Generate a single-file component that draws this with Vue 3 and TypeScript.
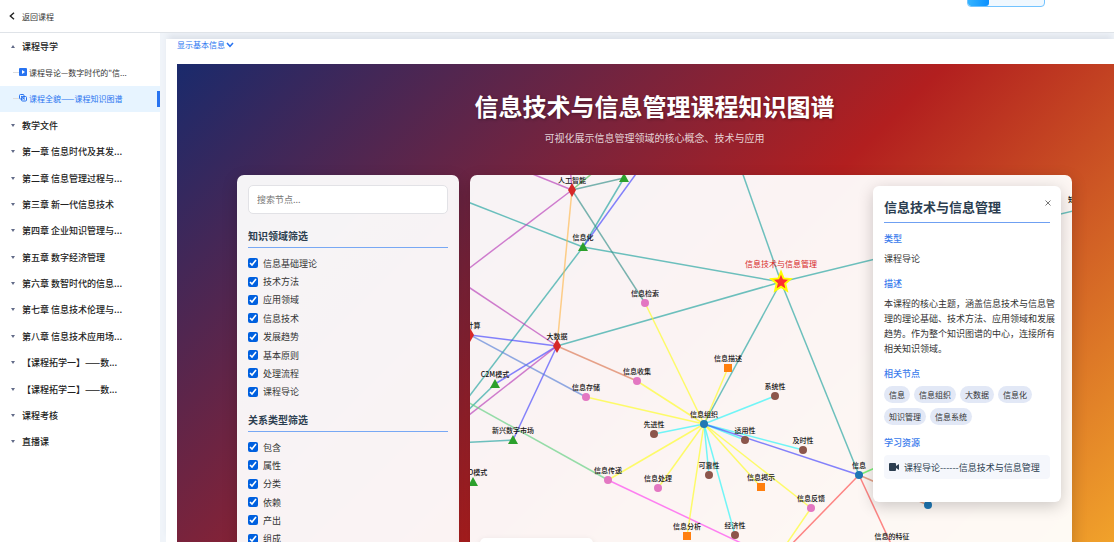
<script setup lang="ts">
import { ref } from 'vue'

type Shape = 'circle' | 'square' | 'diamond' | 'triangle'
interface GraphNode { label: string; x: number; y: number; shape: Shape }

const chapters = [
  '教学文件', '第一章 信息时代及其发...', '第二章 信息管理过程与...', '第三章 新一代信息技术',
  '第四章 企业知识管理与...', '第五章 数字经济管理', '第六章 数智时代的信息...', '第七章 信息技术伦理与...',
  '第八章 信息技术应用场...', '【课程拓学一】——数...', '【课程拓学二】——数...', '课程考核', '直播课',
]

const domains = ref(['信息基础理论', '技术方法', '应用领域', '信息技术', '发展趋势', '基本原则', '处理流程', '课程导论'].map(name => ({ name, on: true })))
const relations = ref(['包含', '属性', '分类', '依赖', '产出', '组成'].map(name => ({ name, on: true })))
const keyword = ref('')
const detailOpen = ref(true)
const related = ['信息', '信息组织', '大数据', '信息化', '知识管理', '信息系统']
const description = ['本课程的核心主题，涵盖信息技术与信息管', '理的理论基础、技术方法、应用领域和发展', '趋势。作为整个知识图谱的中心，连接所有', '相关知识领域。']

const n = (label: string, x: number, y: number, shape: Shape, color: string): GraphNode & { color: string } => ({ label, x, y, shape, color })
const red = '#d62728', green = '#2ca02c', pink = '#e377c2', brown = '#8c564b', orange = '#ff7f0e', blue = '#1f77b4'
const nodes = [
  n('人工智能', 102, 15, 'diamond', red), n('', 154, 3, 'triangle', green), n('信息化', 113, 72, 'triangle', green),
  n('信息检索', 175, 128, 'circle', pink), n('大数据', 87, 171, 'diamond', red), n('云计算', 0, 160, 'diamond', red),
  n('C2M模式', 25, 209, 'triangle', green), n('新兴数字市场', 43, 265, 'triangle', green), n('O2O模式', 3, 307, 'triangle', green),
  n('信息存储', 116, 222, 'circle', pink), n('信息收集', 167, 206, 'circle', pink), n('先进性', 184, 259, 'circle', brown),
  n('信息传递', 138, 305, 'circle', pink), n('信息处理', 188, 313, 'circle', pink), n('信息描述', 258, 193, 'square', orange),
  n('系统性', 305, 221, 'circle', brown), n('信息组织', 234, 249, 'circle', blue), n('适用性', 275, 265, 'circle', brown),
  n('及时性', 333, 275, 'circle', brown), n('可靠性', 239, 300, 'circle', brown), n('信息揭示', 291, 312, 'square', orange),
  n('信息反馈', 341, 333, 'circle', pink), n('信息分析', 217, 361, 'square', orange), n('经济性', 265, 360, 'circle', brown),
  n('信息', 389, 300, 'circle', blue), n('', 458, 330, 'circle', blue), n('信息的特征', 422, 371, 'circle', pink),
  n('知识管理', 612, 34, 'circle', blue),
]

const teal = '#20a4a0', slate = '#35908a', violet = '#b83cb8', indigo = '#4444ff', yellow = '#ffff20', cyan = '#28f5fa'
const edges: [number, number, number, number, string][] = [
  [113, 72, -15, 22, teal], [113, 72, 311, 107, teal], [311, 107, 265, -23, teal], [311, 107, 87, 171, teal],
  [311, 107, 234, 249, teal], [311, 107, 389, 300, teal], [311, 107, 615, 33, teal], [113, 72, 154, 3, teal],
  [113, 72, -15, 240, teal], [113, 72, 171, -8, indigo],
  [102, 15, 50, -6, violet], [102, 15, -15, 104, violet], [102, 15, 100, -10, violet], [102, 15, 130, -8, '#52c252'],
  [102, 15, 154, 3, slate], [102, 15, 175, 128, slate], [102, 15, 87, 171, '#ffb84d'],
  [-15, 103, 87, 171, violet], [87, 171, 0, 160, indigo], [87, 171, 25, 209, indigo], [87, 171, -15, 251, violet],
  [87, 171, 43, 265, indigo], [87, 171, 167, 206, '#dc7650'], [0, 160, 116, 222, '#5880d8'],
  [25, 209, -15, 248, teal], [43, 265, -15, 268, teal], [-15, 220, 138, 305, '#60d080'], [138, 305, 290, 377, '#ff40f0'],
  [234, 249, 175, 128, yellow], [234, 249, 167, 206, yellow], [234, 249, 116, 222, yellow], [234, 249, 138, 305, yellow],
  [234, 249, 188, 313, yellow], [234, 249, 258, 193, yellow], [234, 249, 291, 312, yellow], [234, 249, 341, 333, yellow],
  [234, 249, 217, 361, yellow], [341, 333, 311, 377, yellow],
  [234, 249, 184, 259, cyan], [234, 249, 305, 221, cyan], [234, 249, 275, 265, cyan], [234, 249, 333, 275, cyan],
  [234, 249, 239, 300, cyan], [234, 249, 265, 360, cyan], [234, 249, 389, 300, indigo],
  [389, 300, 314, 377, '#ff4848'], [389, 300, 422, 371, '#ff4848'], [389, 300, 430, 282, '#38ee38'], [389, 300, 458, 330, '#dc7650'],
]
const outlines: Record<Exclude<Shape, 'circle'>, string> = {
  square: 'M-4-4H4V4H-4Z',
  diamond: 'M0-7L4 0L0 7L-4 0Z',
  triangle: 'M0-5L5 4H-5Z',
}
</script>

<template>
  <div class="page">
    <header class="topbar">
      <a href="#" class="back">
        <svg width="6" height="8" viewBox="0 0 6 8"><path d="M5 0.7L1.3 4L5 7.3" /></svg>
        返回课程
      </a>
      <div class="progress"><div class="progress-fill"></div></div>
    </header>
    <div class="body">
      <nav class="sidebar">
        <ul class="chapters">
          <li><a href="#" class="chapter"><i class="caret up"></i>课程导学</a></li>
          <li>
            <a href="#" class="lesson">
              <i class="dash"></i>
              <svg width="8" height="8" viewBox="0 0 8 8"><rect width="8" height="8" rx="1" fill="#2873f0" /><path d="M3 2L6 4L3 6Z" fill="#fff" /></svg>
              <span>课程导论—数字时代的"信...</span>
            </a>
          </li>
          <li class="active">
            <a href="#" class="lesson">
              <i class="dash"></i>
              <svg width="8" height="8" viewBox="0 0 8 8" fill="none" stroke="#2873f0"><rect x="0.5" y="0.5" width="4.5" height="4.5" rx="1" /><rect x="2.5" y="2.5" width="5" height="4.5" rx="1" /><path d="M2 2L6 5.5" /></svg>
              <span>课程全貌——课程知识图谱</span>
            </a>
          </li>
          <li v-for="chapter in chapters" :key="chapter"><a href="#" class="chapter"><i class="caret"></i>{{ chapter }}</a></li>
        </ul>
      </nav>
      <main class="content">
        <button class="info-toggle" type="button">
          显示基本信息
          <svg width="8" height="6" viewBox="0 0 8 6"><path d="M1 1L4 4.3L7 1" /></svg>
        </button>
        <section class="stage">
          <h1>信息技术与信息管理课程知识图谱</h1>
          <p class="subtitle">可视化展示信息管理领域的核心概念、技术与应用</p>
          <div class="workspace">
            <aside class="filters">
              <input v-model="keyword" class="search" type="text" placeholder="搜索节点..." aria-label="搜索节点" />
              <h2>知识领域筛选</h2>
              <div class="options domains">
                <label v-for="item in domains" :key="item.name"><input v-model="item.on" type="checkbox" />{{ item.name }}</label>
              </div>
              <h2>关系类型筛选</h2>
              <div class="options relations">
                <label v-for="item in relations" :key="item.name"><input v-model="item.on" type="checkbox" />{{ item.name }}</label>
              </div>
            </aside>
            <div class="graph">
              <svg class="canvas">
                <line v-for="(e, i) in edges" :key="i" class="edge" :x1="e[0]" :y1="e[1]" :x2="e[2]" :y2="e[3]" :stroke="e[4]" />
                <g v-for="(node, i) in nodes" :key="'n' + i" :transform="`translate(${node.x} ${node.y})`">
                  <circle v-if="node.shape === 'circle'" r="4" :fill="node.color" />
                  <path v-else :d="outlines[node.shape]" :fill="node.color" />
                  <text y="-7">{{ node.label }}</text>
                </g>
                <g transform="translate(311 107)">
                  <path class="star" d="M0-10L2.6-3.6L9.5-3L4.2 1.5L5.9 8.5L0 4.8L-5.9 8.5L-4.2 1.5L-9.5-3L-2.6-3.6Z" />
                  <text class="root-label" y="-15">信息技术与信息管理</text>
                </g>
              </svg>
              <div class="legend"></div>
              <article v-if="detailOpen" class="detail">
                <button class="close" type="button" aria-label="关闭" @click="detailOpen = false">
                  <svg width="6" height="6" viewBox="0 0 6 6"><path d="M0.5 0.5L5.5 5.5M5.5 0.5L0.5 5.5" /></svg>
                </button>
                <h2>信息技术与信息管理</h2>
                <h3>类型</h3>
                <p>课程导论</p>
                <h3>描述</h3>
                <p><span v-for="line in description" :key="line" class="line">{{ line }}</span></p>
                <h3>相关节点</h3>
                <div class="tags"><button v-for="tag in related" :key="tag" type="button">{{ tag }}</button></div>
                <h3>学习资源</h3>
                <a href="#" class="resource">
                  <svg width="10" height="8" viewBox="0 0 10 8"><rect width="7" height="8" rx="1" /><path d="M7 3L10 1V7L7 5Z" /></svg>
                  课程导论------信息技术与信息管理
                </a>
              </article>
            </div>
          </div>
        </section>
      </main>
    </div>
  </div>
</template>

<style>
body { margin: 0; }
</style>

<style scoped>
* { box-sizing: border-box; }
.page {
  height: 100vh;
  overflow: hidden;
  display: flex;
  flex-direction: column;
  font-family: "Noto Sans CJK SC", "Noto Sans", sans-serif;
  font-size: 9px;
  line-height: 15px;
  color: #333;
  background: #f0f4f9;
}
a { color: inherit; text-decoration: none; }
h1, h2, h3, p, ul { margin: 0; padding: 0; }
button { font: inherit; border: 0; background: none; padding: 0; cursor: pointer; }
.topbar {
  position: relative;
  flex: none;
  height: 33px;
  padding: 0 9px;
  display: flex;
  align-items: center;
  background: #fff;
  border-bottom: 1px solid #dfe3e8;
}
.back { display: flex; align-items: center; gap: 7px; font-size: 8px; }
.back svg { fill: none; stroke: #222; stroke-width: 1.4; }
.progress {
  position: absolute;
  right: 69px;
  top: -13px;
  width: 78px;
  height: 20px;
  border: 1px solid #73c3ff;
  border-radius: 4px;
  background: #f0f8ff;
  overflow: hidden;
}
.progress-fill { width: 28%; height: 100%; border-radius: 0 0 3px 3px; background: linear-gradient(90deg, #35b4ff, #0a90ff); }
.body { flex: 1; min-height: 0; display: flex; }
.sidebar { flex: none; width: 160px; background: #fff; }
.chapters { height: 422px; display: grid; grid-auto-rows: 1fr; list-style: none; }
.chapters li { display: flex; align-items: center; white-space: nowrap; }
.chapter { display: flex; align-items: center; gap: 7px; padding-left: 11px; font-weight: 500; color: #222; }
.caret { border: 2px solid transparent; border-top: 3px solid #626b88; border-bottom: 0; }
.caret.up { border-top: 0; border-bottom: 3px solid #626b88; }
.lesson { display: flex; align-items: center; padding-left: 13px; font-size: 8px; }
.lesson svg { margin: 0 2px 2px 0; }
.dash { width: 6px; border-top: 1px solid #ddd; }
.active { position: relative; background: #e7f4ff; color: #2873f0; }
.active::after { content: ""; position: absolute; right: 0; width: 3px; height: 16px; background: #2873f0; }
.content {
  flex: 1;
  min-width: 0;
  margin: 6px 0 0 6px;
  padding-left: 11px;
  background: #fff;
  overflow: hidden;
  box-shadow: 0 -6px 6px -2px #dde2ea;
}
.info-toggle { display: flex; align-items: center; gap: 1px; height: 12px; margin-bottom: 13px; font-size: 8px; line-height: 12px; color: #2873f0; }
.info-toggle svg { fill: none; stroke: #2873f0; stroke-width: 1.5; }
.stage {
  margin-right: -18px;
  min-height: calc(100vh + 41px);
  padding: 24px 60px 20px;
  display: flex;
  flex-direction: column;
  background: linear-gradient(135deg, #1a2a6c, #b21f1f, #fdbb2d);
}
h1 { font-size: 24px; line-height: 36px; text-align: center; color: #fff; text-shadow: 1px 1px 3px rgba(0, 0, 0, 0.35); }
.subtitle { margin: 6px 0 29px; font-size: 10px; line-height: 16px; text-align: center; color: rgba(255, 255, 255, 0.8); }
.workspace { flex: 1; display: flex; gap: 11px; }
.filters, .graph { background: rgba(255, 255, 255, 0.95); border-radius: 7px; box-shadow: 0 5px 16px rgba(0, 0, 0, 0.2); }
.filters { flex: none; width: 222px; padding: 10px 11px; }
.search { display: block; width: 100%; height: 29px; padding: 0 8px; border: 1px solid #e2e2e6; border-radius: 5px; font: inherit; background: #fff; }
.search::placeholder { color: #777; }
h2 { color: #2c3e50; }
.filters h2 { margin: 14px 0 6px; padding-bottom: 3px; font-size: 10px; line-height: 16px; border-bottom: 1px solid #78a8f4; }
.options { display: grid; grid-auto-rows: 1fr; }
.options.domains { height: 147px; }
.options.relations { height: 110px; }
.filters .domains + h2 { margin-top: 11px; }
.options label { display: flex; align-items: center; gap: 5px; }
.options input { width: 10px; height: 10px; margin: 0; accent-color: #0060df; }
.graph { position: relative; flex: 1; min-width: 0; overflow: hidden; }
.canvas { position: absolute; inset: 0; width: 100%; height: 100%; }
.edge { stroke-width: 1.5; opacity: 0.65; }
.canvas text { font-size: 7px; font-weight: 500; text-anchor: middle; fill: #111; }
.canvas .root-label { font-size: 8px; font-weight: 400; fill: #d62728; }
.star { fill: #ff3030; stroke: #ff0; stroke-width: 2; }
.legend { position: absolute; left: 10px; bottom: 11px; width: 113px; height: 78px; border-radius: 5px; background: #fff; box-shadow: 0 2px 6px rgba(0, 0, 0, 0.1); }
.detail {
  position: absolute;
  top: 11px;
  right: 11px;
  width: 188px;
  padding: 11px 11px 23px;
  border-radius: 6px;
  background: #fff;
  box-shadow: 0 4px 16px rgba(0, 0, 0, 0.2);
}
.close { position: absolute; top: 11px; right: 9px; width: 8px; height: 12px; line-height: 6px; }
.close svg { fill: none; stroke: #777; }
.detail h2 { padding-bottom: 5px; font-size: 13px; line-height: 20px; border-bottom: 1px solid #6fa0f2; }
.detail h3 { margin-top: 11px; font-size: 9px; line-height: 14px; font-weight: 500; color: #3a7bec; }
.detail h2 + h3 { margin-top: 9px; }
.detail h3 + * { margin-top: 5px; }
.line { display: block; white-space: nowrap; }
.tags { display: flex; flex-wrap: wrap; gap: 5px 4px; }
.tags button { height: 17px; padding: 0 5px; border-radius: 9px; font-size: 8px; color: #333; background: #e2e8f6; }
.resource { display: flex; align-items: center; gap: 5px; height: 24px; padding-left: 5px; border-radius: 4px; color: #2c3e50; background: #f5f7fc; white-space: nowrap; }
.resource svg { fill: #2c3e50; }
</style>
